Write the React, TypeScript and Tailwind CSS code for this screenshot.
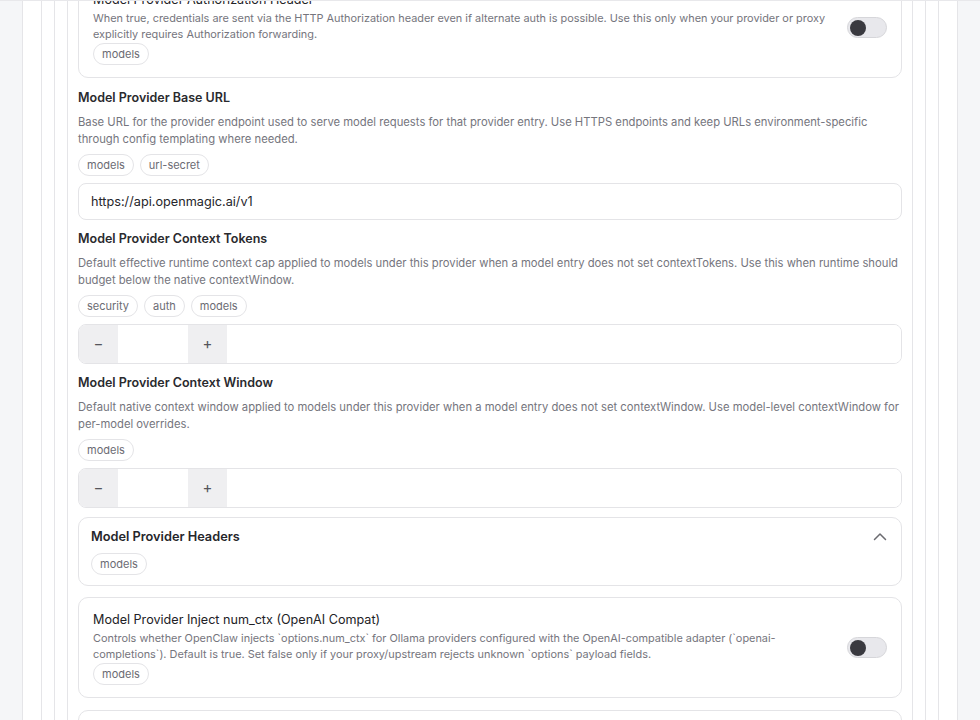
import React from "react";

const FONT = { fontFamily: 'Inter, "Liberation Sans", Arial, sans-serif' };

function Tag({ children }: { children: React.ReactNode }) {
  return (
    <span className="inline-flex h-[22px] items-center rounded-full border border-[#e4e4e7] px-2 text-[11px] leading-4 text-[#6b6b73]">
      {children}
    </span>
  );
}

function Tags({ items, className = "" }: { items: string[]; className?: string }) {
  return (
    <div className={"flex gap-1.5 " + className}>
      {items.map((t) => (
        <Tag key={t}>{t}</Tag>
      ))}
    </div>
  );
}

function Toggle() {
  return (
    <div className="relative h-[21px] w-10 shrink-0 rounded-full border border-[#d6d6da] bg-[#e8e8ec]">
      <div className="absolute left-[2px] top-[1.5px] h-4 w-4 rounded-full bg-[#3a3a40]" />
    </div>
  );
}

function ToggleCard({
  title,
  desc,
  tags,
  className = "",
}: {
  title: string;
  desc: string;
  tags: string[];
  className?: string;
}) {
  return (
    <div
      className={
        "flex items-center gap-3 rounded-[10px] border border-[#e4e4e7] bg-white px-[14px] py-3 " + className
      }
    >
      <div className="min-w-0 flex-1">
        <div className="text-[12.6px] font-normal leading-5 text-[#222226]">{title}</div>
        <div className="text-[10.9px] leading-4 text-[#75757d]">{desc}</div>
        <Tags items={tags} className="mt-px" />
      </div>
      <Toggle />
    </div>
  );
}

function Field({
  title,
  desc,
  tags,
  className = "",
  children,
}: {
  title: string;
  desc: string;
  tags: string[];
  className?: string;
  children: React.ReactNode;
}) {
  return (
    <div className={"flex flex-col " + className}>
      <div className="text-[12.5px] font-semibold leading-[14px] text-[#2a2a2e]">{title}</div>
      <div className="mt-[9px] text-[11.25px] leading-[17px] text-[#75757d]">{desc}</div>
      <Tags items={tags} className="mt-[6px]" />
      <div className="mt-[7px]">{children}</div>
    </div>
  );
}

function Stepper() {
  return (
    <div className="flex h-10 overflow-hidden rounded-lg border border-[#e4e4e7] bg-white">
      <div className="flex w-[39px] items-center justify-center bg-[#efeff1] text-[15px] text-[#55555c]">−</div>
      <div className="w-[70px] bg-white" />
      <div className="flex w-[39px] items-center justify-center bg-[#efeff1] text-[15px] text-[#55555c]">+</div>
      <div className="flex-1 bg-white" />
    </div>
  );
}

export default function App() {
  return (
    <div style={FONT} className="flex h-[720px] overflow-hidden border-t border-[#e8e8eb] bg-[#f5f6f8]">
      <div className="ml-[22px] flex w-[936px] border-x border-[#e5e5e8] bg-white px-[18px]">
        <div className="flex flex-1 border-x border-[#e5e5e8] px-3">
          <div className="flex flex-1 border-x border-[#e5e5e8] px-3">
            <div className="flex-1 border-x border-[#e5e5e8] px-[10px]">
              <div className="-mt-[24px] flex flex-col gap-3">
                <ToggleCard
                  title="Model Provider Authorization Header"
                  desc="When true, credentials are sent via the HTTP Authorization header even if alternate auth is possible. Use this only when your provider or proxy explicitly requires Authorization forwarding."
                  tags={["models"]}
                />
                <Field
                  className="mt-px"
                  title="Model Provider Base URL"
                  desc="Base URL for the provider endpoint used to serve model requests for that provider entry. Use HTTPS endpoints and keep URLs environment-specific through config templating where needed."
                  tags={["models", "url-secret"]}
                >
                  <div className="flex h-[37px] items-center rounded-lg border border-[#e4e4e7] bg-white px-3 text-[12.7px] text-[#26262b]">
                    https://api.openmagic.ai/v1
                  </div>
                </Field>
                <Field
                  title="Model Provider Context Tokens"
                  desc="Default effective runtime context cap applied to models under this provider when a model entry does not set contextTokens. Use this when runtime should budget below the native contextWindow."
                  tags={["security", "auth", "models"]}
                >
                  <Stepper />
                </Field>
                <Field
                  title="Model Provider Context Window"
                  desc="Default native context window applied to models under this provider when a model entry does not set contextWindow. Use model-level contextWindow for per-model overrides."
                  tags={["models"]}
                >
                  <Stepper />
                </Field>
                <div className="-mt-[3px] rounded-[10px] border border-[#e4e4e7] bg-white px-3 pb-[10px] pt-[9px]">
                  <div className="flex items-center justify-between">
                    <div className="text-[12.75px] font-semibold leading-5 text-[#26262b]">Model Provider Headers</div>
                    <svg width="16" height="16" viewBox="0 0 16 16" fill="none" className="mr-[1px]">
                      <path d="M2.5 10.5 L8 5 L13.5 10.5" stroke="#6b6b70" strokeWidth="1.5" strokeLinecap="round" strokeLinejoin="round" />
                    </svg>
                  </div>
                  <Tags items={["models"]} className="mt-1.5" />
                </div>
                <ToggleCard
                  className="-mt-px"
                  title="Model Provider Inject num_ctx (OpenAI Compat)"
                  desc="Controls whether OpenClaw injects `options.num_ctx` for Ollama providers configured with the OpenAI-compatible adapter (`openai-completions`). Default is true. Set false only if your proxy/upstream rejects unknown `options` payload fields."
                  tags={["models"]}
                />
                <ToggleCard
                  title="Model Provider Streaming"
                  desc="Controls whether streaming responses are requested from this provider."
                  tags={["models"]}
                />
              </div>
            </div>
          </div>
        </div>
      </div>
    </div>
  );
}
